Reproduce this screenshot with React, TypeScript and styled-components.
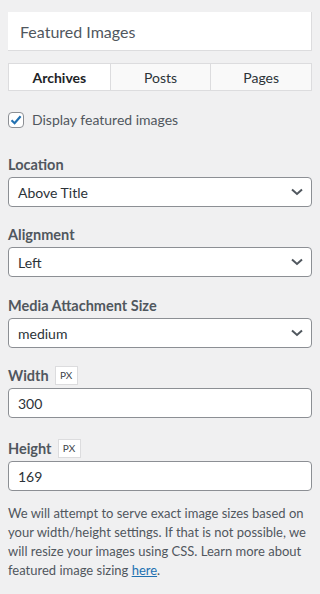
import React from "react";
import styled, { createGlobalStyle } from "styled-components";

const Global = createGlobalStyle`
  html, body { margin: 0; padding: 0; background: #f0f0f1; }
  body { font-family: Lato, "Noto Sans", sans-serif; color: #50575e; }
  * { box-sizing: border-box; }
`;

const Panel = styled.div`
  width: 320px;
  padding: 12px 8px 20px 8px;
  display: flex;
  flex-direction: column;
`;

const Header = styled.div`
  width: 304px;
  height: 39px;
  background: #fff;
  border-right: 1px solid #dcdcde;
  border-bottom: 1px solid #dcdcde;
  display: flex;
  align-items: center;
  padding-left: 12px;
  font-size: 16px;
  color: #50575e;
`;

const Tabs = styled.div`
  margin-top: 12px;
  width: 304px;
  display: grid;
  grid-template-columns: 1fr 1fr 1fr;
  border: 1px solid #dcdcde;
  background: #f9f9f9;
`;

const Tab = styled.div<{ $active?: boolean }>`
  height: 26px;
  display: flex;
  align-items: center;
  justify-content: center;
  font-size: 14px;
  color: ${(p) => (p.$active ? "#1d2327" : "#2c3338")};
  font-weight: ${(p) => (p.$active ? 700 : 400)};
  background: ${(p) => (p.$active ? "#fff" : "#f9f9f9")};
  & + & { border-left: 1px solid #dcdcde; }
`;

const CheckRow = styled.label`
  margin-top: 21px;
  height: 16px;
  line-height: 16px;
  display: flex;
  align-items: center;
  gap: 8px;
  font-size: 14px;
  color: #50575e;
`;

const Box = styled.span`
  width: 16px;
  height: 16px;
  border: 1px solid #8c8f94;
  border-radius: 4px;
  background: #fff;
  display: flex;
  align-items: center;
  justify-content: center;
`;

const Field = styled.div<{ $gap?: number }>`
  margin-top: ${(p) => p.$gap ?? 18}px;
  display: flex;
  flex-direction: column;
`;

const LabelRow = styled.div`
  display: flex;
  align-items: center;
  gap: 6px;
  height: 20px;
  font-size: 14.5px;
  font-weight: 700;
  color: #50575e;
`;

const Unit = styled.span`
  width: 23px;
  height: 19px;
  background: #fff;
  border: 1px solid #dcdcde;
  font-size: 10px;
  font-weight: 400;
  color: #3c434a;
  display: flex;
  align-items: center;
  justify-content: center;
`;

const Control = styled.div`
  margin-top: 3px;
  width: 304px;
  height: 30px;
  border: 1px solid #8c8f94;
  border-radius: 4px;
  background: #fff;
  display: flex;
  align-items: center;
  justify-content: space-between;
  padding: 0 8px 0 9px;
  font-size: 14px;
  color: #2c3338;
`;

const Help = styled.p`
  margin: 13px 0 0 0;
  font-size: 13px;
  line-height: 19px;
  color: #50575e;
  a { color: #2271b1; text-decoration: underline; }
`;

const Chevron = () => (
  <svg width="12" height="8" viewBox="0 0 12 8">
    <path d="M1 1.5 L6 6 L11 1.5" fill="none" stroke="#50575e" strokeWidth="2" />
  </svg>
);

const Select = ({ value }: { value: string }) => (
  <Control>
    <span>{value}</span>
    <Chevron />
  </Control>
);

export default function App() {
  return (
    <Panel>
      <Global />
      <Header>Featured Images</Header>
      <Tabs>
        <Tab $active>Archives</Tab>
        <Tab>Posts</Tab>
        <Tab>Pages</Tab>
      </Tabs>
      <CheckRow>
        <Box>
          <svg width="14" height="14" viewBox="0 0 14 14">
            <path d="M2.5 7.2 L5.6 10.2 L11.6 3.2" fill="none" stroke="#2271b1" strokeWidth="2.2" />
          </svg>
        </Box>
        Display featured images
      </CheckRow>
      <Field $gap={26}>
        <LabelRow>Location</LabelRow>
        <Select value="Above Title" />
      </Field>
      <Field $gap={17}>
        <LabelRow>Alignment</LabelRow>
        <Select value="Left" />
      </Field>
      <Field>
        <LabelRow>Media Attachment Size</LabelRow>
        <Select value="medium" />
      </Field>
      <Field $gap={17}>
        <LabelRow>Width <Unit>PX</Unit></LabelRow>
        <Control>300</Control>
      </Field>
      <Field $gap={20}>
        <LabelRow>Height <Unit>PX</Unit></LabelRow>
        <Control>169</Control>
      </Field>
      <Help>
        We will attempt to serve exact image sizes based on your width/height settings. If that is not possible, we will resize your images using CSS. Learn more about featured image sizing <a href="#">here</a>.
      </Help>
    </Panel>
  );
}
